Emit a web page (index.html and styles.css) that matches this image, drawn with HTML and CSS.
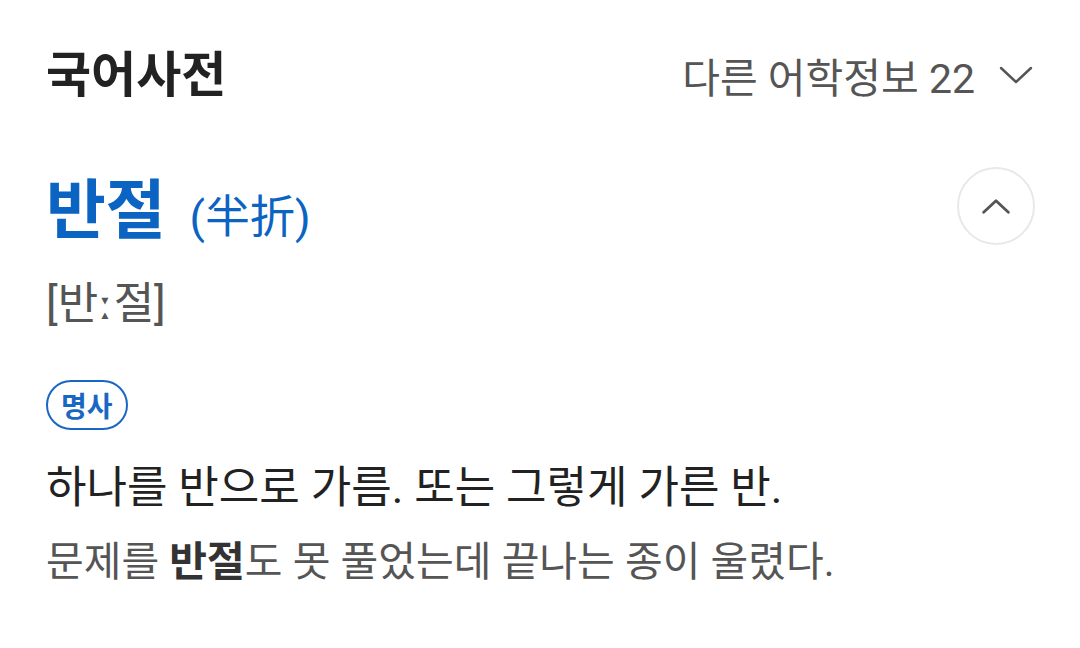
FILE: index.html
```html
<!DOCTYPE html>
<html lang="ko">
<head>
<meta charset="utf-8">
<link rel="stylesheet" href="styles.css">
</head>
<body>
<div class="page">
  <header class="header">
    <h1 class="title">국어사전</h1>
    <div class="more">
      <span>다른 어학정보 22</span>
      <svg class="chev-down" viewBox="0 0 34 20" width="34" height="20"><path d="M2 3 L17 17 L32 3" fill="none" stroke="#555" stroke-width="2.4" stroke-linecap="round" stroke-linejoin="round"/></svg>
    </div>
  </header>
  <section class="entry">
    <div class="word-row">
      <div class="word"><span class="word-main">반절</span><span class="hanja">(半折)</span></div>
      <button class="toggle"><svg viewBox="0 0 34 20" width="30" height="18"><path d="M3 17 L17 4 L31 17" fill="none" stroke="#555" stroke-width="3.2" stroke-linecap="round" stroke-linejoin="round"/></svg></button>
    </div>
    <div class="pron">[반<span class="long">ː</span>절]</div>
    <div class="pos-row"><span class="pos">명사</span></div>
    <p class="def">하나를 반으로 가름. 또는 그렇게 가른 반.</p>
    <p class="ex">문제를 <b>반절</b>도 못 풀었는데 끝나는 종이 울렸다.</p>
  </section>
</div>
</body>
</html>
```
FILE: styles.css
```css
* { box-sizing: border-box; }
html, body { margin: 0; padding: 0; background: #fff; }
body { font-family: Roboto, "Noto Sans CJK KR", sans-serif; color: #222; }
.page { width: 1080px; padding: 0 47px 0 46px; }
.header { height: 150px; display: flex; align-items: center; justify-content: space-between; }
.title { margin: 0; font-size: 49px; font-weight: 700; color: #222; line-height: 1; }
.more { display: flex; align-items: center; gap: 24px; font-size: 41px; color: #555; }
.chev-down { display: block; }
.word-row { height: 124px; display: flex; align-items: center; justify-content: space-between; }
.word { display: flex; align-items: baseline; gap: 24px; }
.word-main { font-size: 65px; font-weight: 700; color: #0b63c2; line-height: 1; }
.hanja { font-size: 45px; color: #0b63c2; }
.toggle { width: 78px; height: 78px; border-radius: 50%; border: 2px solid #e8e8e8; background: #fff; display: flex; align-items: center; justify-content: center; padding: 0; margin-top: -12px; margin-right: -2px; }
.pron { height: 60px; line-height: 60px; font-size: 44px; color: #555; }
.long { font-family: "DejaVu Sans", sans-serif; font-size: 40px; margin: 0 1px; }
.pos-row { margin-top: 46px; display: flex; }
.pos { display: inline-flex; align-items: center; height: 50px; padding: 0 13px; border: 2px solid #1a66c4; border-radius: 25px; color: #1a66c4; font-size: 28px; font-weight: 700; }
.def { margin: 32px 0 0; font-size: 44px; line-height: 52px; color: #222; }
.ex { margin: 22px 0 0; font-size: 41px; line-height: 52px; color: #555; }
.ex b { color: #333; font-weight: 700; }
```
